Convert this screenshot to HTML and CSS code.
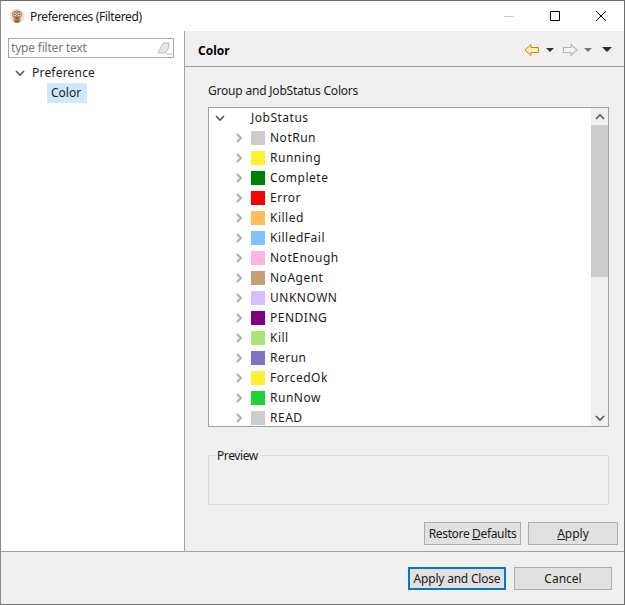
FILE: index.html
```html
<!DOCTYPE html>
<html lang="en">
<head>
    <meta charset="UTF-8">
    <title>Preferences (Filtered)</title>
    <link rel="stylesheet" href="styles.css">
</head>
<body>
    <div class="window">
        <div class="titlebar">
            <svg class="app-icon" width="16" height="16" viewBox="0 0 16 16">
                <circle cx="8" cy="8" r="7.5" fill="#eee2da"/>
                <path d="M3 6.500C3 3.500 5.500 2.500 8 2.500s5 1 5 4c0 1.500-.5 2.500-1.500 3V13l-1.500 1.500H6L4.500 13V9.500C3.500 9 3 8 3 6.500z" fill="#b98a60"/>
                <circle cx="5.800" cy="6.500" r="1.500" fill="#f6efe6"/>
                <circle cx="10.200" cy="6.500" r="1.500" fill="#f6efe6"/>
                <circle cx="5.800" cy="6.500" r=".8" fill="#222"/>
                <circle cx="10.200" cy="6.500" r=".8" fill="#222"/>
                <path d="M6.500 9.500h3L8 11.500z" fill="#6e4526"/>
                <path d="M6 12.500h4v2H6z" fill="#8a5a32"/>
            </svg>
            <span class="title">Preferences (Filtered)</span>
            <div class="win-buttons">
                <svg width="12" height="12" viewBox="0 0 12 12"><path d="M1 6.500h10" stroke="#ccc" fill="none"/></svg>
                <svg width="12" height="12" viewBox="0 0 12 12"><path d="M1.500 1.500h9v9h-9z" stroke="#000" fill="none"/></svg>
                <svg width="12" height="12" viewBox="0 0 12 12"><path d="M1 1l10 10M11 1L1 11" stroke="#000" fill="none"/></svg>
            </div>
        </div>

        <div class="main">
            <div class="sidebar">
                <div class="filter">
                    <span>type filter text</span>
                    <svg width="16" height="14" viewBox="0 0 16 14"><path d="M1 12L6 2h6l-1 6-3 4z" fill="#e8e8e8" stroke="#bbb"/><path d="M9 13h6" stroke="#bbb"/></svg>
                </div>
                <div class="nav-row">
                    <svg class="chev" width="10" height="10" viewBox="0 0 10 10"><path d="M1 3l4 4 4-4" stroke="#555" stroke-width="1.6" fill="none"/></svg>
                    <span>Preference</span>
                </div>
                <div class="nav-child"><span class="nav-selected">Color</span></div>
            </div>

            <div class="content">
                <div class="content-head">
                    <span class="content-title">Color</span>
                    <div class="nav-tools">
                        <svg width="16" height="14" viewBox="0 0 16 14"><path d="M1 7l6-5.500v3h7.500v5H7v3z" fill="#fdeeb0" stroke="#c8860f"/></svg>
                        <span class="drop"></span>
                        <svg class="fwd" width="16" height="14" viewBox="0 0 16 14"><path d="M15 7L9 1.500v3H1.500v5H9v3z" fill="#f4f4f4" stroke="#b8b8b8" stroke-width="1.200"/></svg>
                        <span class="drop grey"></span>
                        <span class="drop menu"></span>
                    </div>
                </div>

                <div class="content-body">
                    <div class="group-label">Group and JobStatus Colors</div>
                    <div class="tree">
                        <div class="tree-list">
                            <div class="tree-root">
                                <svg width="10" height="10" viewBox="0 0 10 10"><path d="M1 3l4 4 4-4" stroke="#555" stroke-width="1.6" fill="none"/></svg>
                                <span>JobStatus</span>
                            </div>
                            <div class="tree-row"><svg width="8" height="10" viewBox="0 0 8 10"><path d="M2 1l4 4-4 4" stroke="#aaa" stroke-width="1.8" fill="none"/></svg><i class="swatch c-notrun"></i><span>NotRun</span></div>
                            <div class="tree-row"><svg width="8" height="10" viewBox="0 0 8 10"><path d="M2 1l4 4-4 4" stroke="#aaa" stroke-width="1.8" fill="none"/></svg><i class="swatch c-running"></i><span>Running</span></div>
                            <div class="tree-row"><svg width="8" height="10" viewBox="0 0 8 10"><path d="M2 1l4 4-4 4" stroke="#aaa" stroke-width="1.8" fill="none"/></svg><i class="swatch c-complete"></i><span>Complete</span></div>
                            <div class="tree-row"><svg width="8" height="10" viewBox="0 0 8 10"><path d="M2 1l4 4-4 4" stroke="#aaa" stroke-width="1.8" fill="none"/></svg><i class="swatch c-error"></i><span>Error</span></div>
                            <div class="tree-row"><svg width="8" height="10" viewBox="0 0 8 10"><path d="M2 1l4 4-4 4" stroke="#aaa" stroke-width="1.8" fill="none"/></svg><i class="swatch c-killed"></i><span>Killed</span></div>
                            <div class="tree-row"><svg width="8" height="10" viewBox="0 0 8 10"><path d="M2 1l4 4-4 4" stroke="#aaa" stroke-width="1.8" fill="none"/></svg><i class="swatch c-killedfail"></i><span>KilledFail</span></div>
                            <div class="tree-row"><svg width="8" height="10" viewBox="0 0 8 10"><path d="M2 1l4 4-4 4" stroke="#aaa" stroke-width="1.8" fill="none"/></svg><i class="swatch c-notenough"></i><span>NotEnough</span></div>
                            <div class="tree-row"><svg width="8" height="10" viewBox="0 0 8 10"><path d="M2 1l4 4-4 4" stroke="#aaa" stroke-width="1.8" fill="none"/></svg><i class="swatch c-noagent"></i><span>NoAgent</span></div>
                            <div class="tree-row"><svg width="8" height="10" viewBox="0 0 8 10"><path d="M2 1l4 4-4 4" stroke="#aaa" stroke-width="1.8" fill="none"/></svg><i class="swatch c-unknown"></i><span>UNKNOWN</span></div>
                            <div class="tree-row"><svg width="8" height="10" viewBox="0 0 8 10"><path d="M2 1l4 4-4 4" stroke="#aaa" stroke-width="1.8" fill="none"/></svg><i class="swatch c-pending"></i><span>PENDING</span></div>
                            <div class="tree-row"><svg width="8" height="10" viewBox="0 0 8 10"><path d="M2 1l4 4-4 4" stroke="#aaa" stroke-width="1.8" fill="none"/></svg><i class="swatch c-kill"></i><span>Kill</span></div>
                            <div class="tree-row"><svg width="8" height="10" viewBox="0 0 8 10"><path d="M2 1l4 4-4 4" stroke="#aaa" stroke-width="1.8" fill="none"/></svg><i class="swatch c-rerun"></i><span>Rerun</span></div>
                            <div class="tree-row"><svg width="8" height="10" viewBox="0 0 8 10"><path d="M2 1l4 4-4 4" stroke="#aaa" stroke-width="1.8" fill="none"/></svg><i class="swatch c-forcedok"></i><span>ForcedOk</span></div>
                            <div class="tree-row"><svg width="8" height="10" viewBox="0 0 8 10"><path d="M2 1l4 4-4 4" stroke="#aaa" stroke-width="1.8" fill="none"/></svg><i class="swatch c-runnow"></i><span>RunNow</span></div>
                            <div class="tree-row"><svg width="8" height="10" viewBox="0 0 8 10"><path d="M2 1l4 4-4 4" stroke="#aaa" stroke-width="1.8" fill="none"/></svg><i class="swatch c-notrun"></i><span>READ</span></div>
                        </div>
                        <div class="scrollbar">
                            <div class="arrow"><svg width="10" height="8" viewBox="0 0 10 8"><path d="M1 6l4-4 4 4" stroke="#555" stroke-width="1.6" fill="none"/></svg></div>
                            <div class="track"><div class="thumb"></div></div>
                            <div class="arrow"><svg width="10" height="8" viewBox="0 0 10 8"><path d="M1 2l4 4 4-4" stroke="#555" stroke-width="1.6" fill="none"/></svg></div>
                        </div>
                    </div>

                    <fieldset class="preview">
                        <legend>Preview</legend>
                    </fieldset>

                    <div class="page-buttons">
                        <button type="button" class="btn restore">Restore <u>D</u>efaults</button>
                        <button type="button" class="btn apply"><u>A</u>pply</button>
                    </div>
                </div>
            </div>
        </div>

        <div class="footer">
            <button type="button" class="btn primary">Apply and Close</button>
            <button type="button" class="btn cancel">Cancel</button>
        </div>
    </div>
</body>
</html>
```

FILE: styles.css
```css
* {
    box-sizing: border-box;
}

html, body {
    margin: 0;
    padding: 0;
}

body {
    font-family: "Noto Sans", "Open Sans", sans-serif;
    font-size: 12px;
    color: #1a1a1a;
}

.window {
    width: 625px;
    height: 605px;
    display: flex;
    flex-direction: column;
    border: 1px solid #6e6e6e;
    border-left-color: #8a8a8a;
    background-color: #f0f0f0;
}

.titlebar {
    height: 30px;
    flex: none;
    display: flex;
    align-items: center;
    padding-left: 8px;
    background-color: #fff;
}

.app-icon {
    margin-right: 5px;
}

.title {
    flex: 1;
    letter-spacing: -0.35px;
}

.win-buttons {
    display: flex;
    gap: 34px;
    padding-right: 17px;
}

.main {
    flex: 1;
    display: flex;
    min-height: 0;
    border-bottom: 1px solid #a0a0a0;
}

.sidebar {
    width: 184px;
    flex: none;
    padding: 7px 10px 0 7px;
    background-color: #fff;
    border-right: 1px solid #a0a0a0;
}

.filter {
    height: 20px;
    display: flex;
    align-items: center;
    justify-content: space-between;
    padding: 0 0 0 2px;
    border: 1px solid #a9a9a9;
    color: #777;
}

.filter span {
    padding-bottom: 2px;
    letter-spacing: -0.2px;
}

.nav-row {
    display: flex;
    align-items: center;
    height: 20px;
    margin-top: 5px;
    padding-left: 7px;
}

.nav-row span {
    padding-bottom: 2px;
    letter-spacing: 0.2px;
}

.nav-row .chev {
    margin-right: 7px;
}

.nav-child {
    height: 20px;
    padding-left: 39px;
}

.nav-selected {
    display: inline-block;
    width: 40px;
    height: 20px;
    line-height: 19px;
    padding-left: 4px;
    background-color: #cde8ff;
}

.content {
    flex: 1;
    display: flex;
    flex-direction: column;
    min-width: 0;
}

.content-head {
    height: 36px;
    flex: none;
    display: flex;
    align-items: center;
    justify-content: space-between;
    padding: 2px 12px 0 13px;
    border-bottom: 1px solid #a0a0a0;
}

.content-title {
    padding-top: 2px;
    font-weight: 700;
    color: #000;
}

.nav-tools {
    display: flex;
    align-items: center;
}

.drop {
    width: 0;
    height: 0;
    margin-left: 6px;
    border-left: 4px solid transparent;
    border-right: 4px solid transparent;
    border-top: 4px solid #333;
}

.drop.grey {
    border-top-color: #777;
}

.drop.menu {
    margin-left: 10px;
    border-left-width: 5px;
    border-right-width: 5px;
    border-top: 5px solid #2e2440;
}

.fwd {
    margin-left: 8px;
}

.content-body {
    flex: 1;
    display: flex;
    flex-direction: column;
    padding: 14px 6px 0 23px;
}

.group-label {
    height: 18px;
    line-height: 20px;
    letter-spacing: -0.2px;
}

.tree {
    width: 401px;
    height: 320px;
    margin-top: 8px;
    display: flex;
    background-color: #fff;
    border: 1px solid #a0a0a0;
    overflow: hidden;
}

.tree-list {
    flex: 1;
}

.tree-root,
.tree-row {
    height: 20px;
    display: flex;
    align-items: center;
}

.tree-root span,
.tree-row span {
    padding-bottom: 2px;
    letter-spacing: 0.5px;
}

.tree-root {
    padding-left: 6px;
}

.tree-root span {
    margin-left: 26px;
}

.tree-row {
    padding-left: 26px;
}

.swatch {
    width: 14px;
    height: 14px;
    margin-left: 8px;
    margin-right: 5px;
}

.c-notrun { background-color: #cccccc; }
.c-running { background-color: #fff032; }
.c-complete { background-color: #008000; }
.c-error { background-color: #ff0000; }
.c-killed { background-color: #ffbe5a; }
.c-killedfail { background-color: #82c3ff; }
.c-notenough { background-color: #ffb4e1; }
.c-noagent { background-color: #c8a078; }
.c-unknown { background-color: #d7beff; }
.c-pending { background-color: #800080; }
.c-kill { background-color: #aae678; }
.c-rerun { background-color: #7d73c8; }
.c-forcedok { background-color: #fff032; }
.c-runnow { background-color: #22d132; }

.scrollbar {
    width: 17px;
    flex: none;
    display: flex;
    flex-direction: column;
    background-color: #f0f0f0;
}

.arrow {
    height: 17px;
    flex: none;
    display: flex;
    align-items: center;
    justify-content: center;
}

.track {
    flex: 1;
}

.thumb {
    height: 152px;
    background-color: #cdcdcd;
}

.preview {
    width: 401px;
    height: 59px;
    margin: 19px 0 0;
    padding: 0;
    border: 1px solid #dcdcdc;
}

.preview legend {
    margin-left: 6px;
    padding: 2px 2px 0;
    line-height: 16px;
    letter-spacing: -0.4px;
}

.page-buttons {
    display: flex;
    justify-content: flex-end;
    gap: 7px;
    margin-top: 17px;
}

.btn {
    height: 23px;
    padding: 0;
    font-family: inherit;
    font-size: 12px;
    color: #1a1a1a;
    background-color: #e1e1e1;
    border: 1px solid #adadad;
}

.restore {
    width: 97px;
    letter-spacing: -0.35px;
}

.apply {
    width: 90px;
}

.footer {
    height: 52px;
    flex: none;
    display: flex;
    justify-content: flex-end;
    align-items: flex-start;
    gap: 8px;
    padding: 15px 12px 0 0;
}

.primary {
    width: 98px;
    letter-spacing: -0.2px;
    border: 2px solid #0078d7;
}

.cancel {
    width: 98px;
}
```
